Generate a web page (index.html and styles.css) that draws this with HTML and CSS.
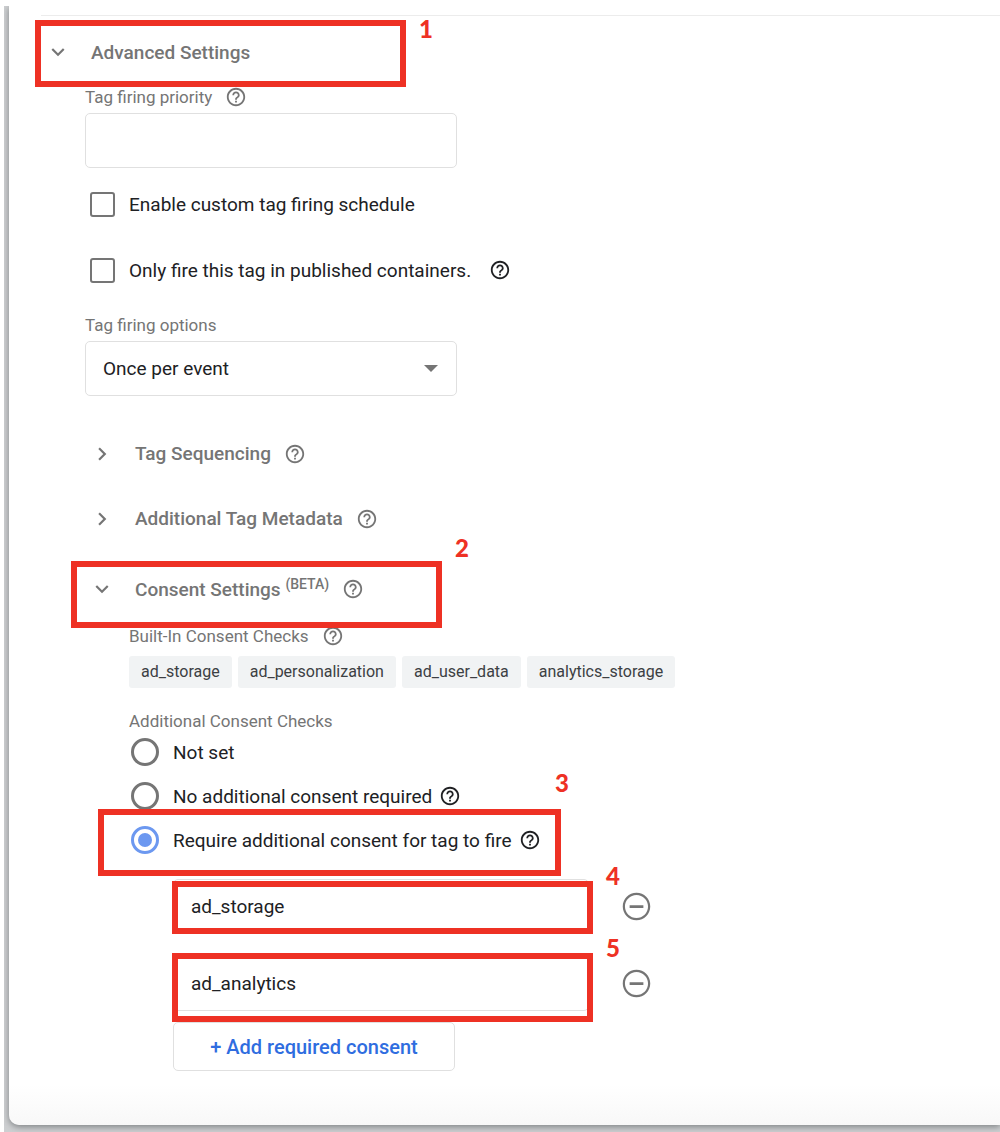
FILE: index.html
```html
<!DOCTYPE html>
<html lang="en">
  <head>
    <meta charset="UTF-8" />
    <meta name="viewport" content="width=device-width, initial-scale=1.0" />
    <title>Advanced Settings</title>
    <link rel="stylesheet" href="styles.css">
  </head>
  <body>
    <!-- shared icons -->
    <svg class="sprite" aria-hidden="true">
      <symbol id="help" viewBox="0 0 24 24">
        <path d="M11 18h2v-2h-2v2zm1-16C6.48 2 2 6.48 2 12s4.48 10 10 10 10-4.48 10-10S17.52 2 12 2zm0 18c-4.41 0-8-3.59-8-8s3.59-8 8-8 8 3.59 8 8-3.59 8-8 8zm0-14c-2.21 0-4 1.79-4 4h2c0-1.1.9-2 2-2s2 .9 2 2c0 2-3 1.75-3 5h2c0-2.25 3-2.5 3-5 0-2.21-1.79-4-4-4z" />
      </symbol>
      <symbol id="down" viewBox="0 0 24 24">
        <path d="M7.41 8.59L12 13.17l4.59-4.58L18 10l-6 6-6-6z" />
      </symbol>
      <symbol id="right" viewBox="0 0 24 24">
        <path d="M8.59 16.59L13.17 12 8.59 7.41 10 6l6 6-6 6z" />
      </symbol>
      <symbol id="minus" viewBox="0 0 24 24">
        <path d="M7 11v2h10v-2H7zm5-9C6.48 2 2 6.48 2 12s4.48 10 10 10 10-4.48 10-10S17.52 2 12 2zm0 18.4c-4.64 0-8.4-3.76-8.4-8.4s3.76-8.4 8.4-8.4 8.4 3.76 8.4 8.4-3.76 8.4-8.4 8.4z" />
      </symbol>
    </svg>

    <div class="backdrop">
      <main class="panel">
        <section class="settings">
          <div class="section-head main-head">
            <button type="button" class="toggle" aria-expanded="true">
              <svg class="chevron"><use href="#down" /></svg>
              Advanced Settings
            </button>
            <div class="callout callout-1"><span class="number">1</span></div>
          </div>

          <div class="nested">
            <div class="field-label">
              <label for="priority">Tag firing priority</label>
              <button type="button" class="help" aria-label="Help"><svg><use href="#help" /></svg></button>
            </div>
            <input class="text-field" type="text" id="priority" />

            <div class="checks">
              <div class="check-row">
                <input class="checkbox" type="checkbox" id="schedule" />
                <label for="schedule">Enable custom tag firing schedule</label>
              </div>
              <div class="check-row">
                <input class="checkbox" type="checkbox" id="published" />
                <label for="published">Only fire this tag in published containers.</label>
                <button type="button" class="help dark" aria-label="Help"><svg><use href="#help" /></svg></button>
              </div>
            </div>

            <div class="field-label">
              <label for="options">Tag firing options</label>
            </div>
            <div class="select-wrap">
              <select class="text-field" id="options">
                <option>Once per event</option>
              </select>
              <svg class="caret" viewBox="0 0 14 7"><path d="M0 0h14L7 7z" /></svg>
            </div>

            <div class="subsections">
              <div class="section-head">
                <button type="button" class="toggle" aria-expanded="false">
                  <svg class="chevron"><use href="#right" /></svg>
                  Tag Sequencing
                </button>
                <button type="button" class="help" aria-label="Help"><svg><use href="#help" /></svg></button>
              </div>
              <div class="section-head">
                <button type="button" class="toggle" aria-expanded="false">
                  <svg class="chevron"><use href="#right" /></svg>
                  Additional Tag Metadata
                </button>
                <button type="button" class="help" aria-label="Help"><svg><use href="#help" /></svg></button>
              </div>
              <div class="section-head consent-head">
                <button type="button" class="toggle" aria-expanded="true">
                  <svg class="chevron"><use href="#down" /></svg>
                  <span>Consent Settings <sup>(BETA)</sup></span>
                </button>
                <button type="button" class="help" aria-label="Help"><svg><use href="#help" /></svg></button>
                <div class="callout callout-2"><span class="number">2</span></div>
              </div>
            </div>

            <div class="nested">
              <div class="field-label">
                <span>Built-In Consent Checks</span>
                <button type="button" class="help" aria-label="Help"><svg><use href="#help" /></svg></button>
              </div>
              <ul class="chips">
                <li>ad_storage</li>
                <li>ad_personalization</li>
                <li>ad_user_data</li>
                <li>analytics_storage</li>
              </ul>

              <div class="field-label" id="additional">Additional Consent Checks</div>
              <div role="radiogroup" aria-labelledby="additional">
                <div class="radio-row">
                  <input class="radio" type="radio" name="consent" id="notset" />
                  <label for="notset">Not set</label>
                </div>
                <div class="radio-row">
                  <input class="radio" type="radio" name="consent" id="none" />
                  <label for="none">No additional consent required</label>
                  <button type="button" class="help dark" aria-label="Help"><svg><use href="#help" /></svg></button>
                </div>
                <div class="radio-row">
                  <input class="radio" type="radio" name="consent" id="require" checked />
                  <label for="require">Require additional consent for tag to fire</label>
                  <button type="button" class="help dark" aria-label="Help"><svg><use href="#help" /></svg></button>
                  <div class="callout callout-3"><span class="number">3</span></div>
                </div>
              </div>

              <div class="nested consents">
                <div class="consent-row">
                  <input class="text-field" type="text" value="ad_storage" aria-label="Required consent 1" />
                  <button type="button" class="remove" aria-label="Remove"><svg><use href="#minus" /></svg></button>
                  <div class="callout callout-4"><span class="number">4</span></div>
                </div>
                <div class="consent-row">
                  <input class="text-field" type="text" value="ad_analytics" aria-label="Required consent 2" />
                  <button type="button" class="remove" aria-label="Remove"><svg><use href="#minus" /></svg></button>
                  <div class="callout callout-5"><span class="number">5</span></div>
                </div>
                <button type="button" class="add">+ Add required consent</button>
              </div>
            </div>
          </div>
        </section>
      </main>
    </div>
  </body>
</html>
```

FILE: styles.css
```css
* {
  margin: 0;
  padding: 0;
  box-sizing: border-box;
}

html {
  background: #fff;
}

body {
  padding: 6px 0 0 4px;
  font-family: Roboto, "Liberation Sans", sans-serif;
  font-size: 19px;
  color: #202124;
}

button,
input,
select {
  font: inherit;
  color: inherit;
}

button {
  background: none;
  border: none;
  cursor: pointer;
}

svg {
  display: block;
  fill: currentColor;
}

.sprite {
  display: none;
}

.backdrop {
  padding: 0 0 8px 5px;
  background: #cdcfd1;
  overflow: hidden;
}

.panel {
  padding: 9px 0 54px 32px;
  background: linear-gradient(to top, #f8f8f8, #fff 40px);
  border-bottom-left-radius: 10px;
  box-shadow: 0 2px 6px #808486;
}

.settings {
  border-top: 1px solid #ececec;
}

.nested {
  padding-left: 44px;
}

/* collapsible headings */
.section-head {
  position: relative;
  display: flex;
  align-items: center;
  gap: 13px;
  height: 65px;
  color: #757575;
}

.main-head {
  height: 72px;
}

.consent-head {
  height: 76px;
}

.toggle {
  display: flex;
  align-items: center;
  gap: 20px;
  padding-left: 4px;
  font-weight: 500;
}

.chevron {
  width: 26px;
  height: 26px;
}

.subsections {
  margin-top: 25px;
}

sup {
  font-size: 14px;
  line-height: 1;
}

.help svg {
  width: 22px;
  height: 22px;
}

.help {
  color: #757575;
}

.help.dark {
  color: #202124;
}

/* fields */
.field-label {
  display: flex;
  align-items: center;
  gap: 13px;
  height: 18px;
  font-size: 17px;
  color: #757575;
}

.text-field {
  display: block;
  width: 100%;
  height: 55px;
  padding: 0 17px;
  background: #fff;
  border: 1px solid #e0e0e0;
  border-radius: 5px;
  appearance: none;
}

.field-label + .text-field,
.select-wrap {
  max-width: 372px;
  margin-top: 7px;
}

.select-wrap {
  position: relative;
}

.caret {
  position: absolute;
  top: 24px;
  right: 19px;
  width: 14px;
  height: 7px;
  color: #757575;
  pointer-events: none;
}

.checks {
  margin: 3px 0 13px;
}

.check-row {
  display: flex;
  align-items: center;
  height: 66px;
  padding-left: 5px;
}

.checkbox {
  width: 25px;
  height: 25px;
  margin-right: 14px;
  border: 2px solid #757575;
  border-radius: 3px;
  appearance: none;
}

.checkbox:checked {
  background: #4285f4;
}

.check-row .help {
  margin-left: 18px;
}

.chips {
  display: flex;
  flex-wrap: wrap;
  gap: 6px;
  margin: 11px 0 24px;
  list-style: none;
}

.chips li {
  height: 32px;
  padding: 0 12px;
  background: #f1f3f4;
  border-radius: 3px;
  font-size: 16px;
  line-height: 32px;
  color: #3c4043;
}

.radio-row {
  position: relative;
  display: flex;
  align-items: center;
  height: 44px;
  padding-left: 2px;
}

.radio {
  display: grid;
  place-items: center;
  width: 28px;
  height: 28px;
  margin-right: 14px;
  border: 3px solid #757575;
  border-radius: 50%;
  appearance: none;
}

.radio:checked {
  border-color: #6c98f0;
}

.radio:checked::before {
  content: "";
  width: 14px;
  height: 14px;
  border-radius: 50%;
  background: #6c98f0;
}

.radio-row .help {
  margin-left: 7px;
}

/* required consents */
.consents {
  margin-top: 17px;
}

.consent-row {
  position: relative;
  display: flex;
  align-items: center;
  gap: 31px;
  margin-bottom: 22px;
}

.consent-row .text-field {
  max-width: 416px;
}

.remove svg {
  width: 33px;
  height: 33px;
  color: #757575;
}

.add {
  min-width: 282px;
  height: 49px;
  margin-top: -11px;
  padding: 0 33px;
  border: 1px solid #e0e0e0;
  border-radius: 5px;
  font-size: 20px;
  font-weight: 500;
  color: #2f6de0;
}

/* numbered callouts drawn over the form */
.callout {
  position: absolute;
  width: 371px;
  height: 67px;
  border: 6px solid #ee3124;
  pointer-events: none;
}

.number {
  position: absolute;
  left: 100%;
  bottom: 100%;
  margin-left: 19px;
  font: 900 24px/24px Lato, "Open Sans", sans-serif;
  color: #ee3124;
}

.callout-1 {
  top: 4px;
  left: -6px;
}

.callout-1 .number {
  bottom: auto;
  top: -9px;
}

.callout-2 {
  top: 10px;
  left: -14px;
}

.callout-2 .number {
  margin-bottom: 7px;
}

.callout-3 {
  top: -9px;
  left: -31px;
  width: 463px;
}

.callout-3 .number {
  margin: 0 0 20px;
}

.callout-4,
.callout-5 {
  top: 2px;
  left: -1px;
  width: 421px;
  height: 53px;
}

.callout-4 .number,
.callout-5 .number {
  margin-bottom: -1px;
}

.callout-5 {
  top: -3px;
  height: 69px;
}
```
